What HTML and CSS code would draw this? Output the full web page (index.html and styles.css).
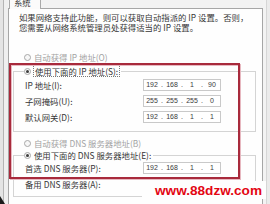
FILE: index.html
```html
<!DOCTYPE html>
<html lang="zh-CN">
<head>
<meta charset="utf-8">
<title>Internet 协议 (TCP/IP) 属性</title>
<link rel="stylesheet" href="styles.css">
</head>
<body>
<div class="screen">
  <div class="side-l"></div>
  <div class="main">
    <div class="tabs"><div class="tab"><span>系统</span></div></div>
    <div class="panel">
      <p class="intro">如果网络支持此功能，则可以获取自动指派的 IP 设置。否则，<br>您需要从网络系统管理员处获得适当的 IP 设置。</p>
      <div class="radio off"><span class="dot"></span>自动获得 IP 地址(O)</div>
      <fieldset class="group g1">
        <legend><span class="radio"><span class="dot on"></span><span class="focus">使用下面的 IP 地址(S):</span></span></legend>
        <div class="row"><span class="lbl">IP 地址(I):</span><span class="ip"><span class="oct">192</span><span class="sep">.</span><span class="oct">168</span><span class="sep">.</span><span class="oct">1</span><span class="sep">.</span><span class="oct">90</span></span></div>
        <div class="row"><span class="lbl">子网掩码(U):</span><span class="ip"><span class="oct">255</span><span class="sep">.</span><span class="oct">255</span><span class="sep">.</span><span class="oct">255</span><span class="sep">.</span><span class="oct">0</span></span></div>
        <div class="row"><span class="lbl">默认网关(D):</span><span class="ip"><span class="oct">192</span><span class="sep">.</span><span class="oct">168</span><span class="sep">.</span><span class="oct">1</span><span class="sep">.</span><span class="oct">1</span></span></div>
      </fieldset>
      <div class="radio off r2"><span class="dot"></span>自动获得 DNS 服务器地址(B)</div>
      <fieldset class="group g2">
        <legend><span class="radio"><span class="dot on"></span>使用下面的 DNS 服务器地址(E):</span></legend>
        <div class="row"><span class="lbl">首选 DNS 服务器(P):</span><span class="ip"><span class="oct">192</span><span class="sep">.</span><span class="oct">168</span><span class="sep">.</span><span class="oct">1</span><span class="sep">.</span><span class="oct">1</span></span></div>
        <div class="row"><span class="lbl">备用 DNS 服务器(A):</span></div>
      </fieldset>
    </div>
  </div>
  <div class="side-r"></div>
  <div class="mark"></div>
  <div class="watermark">www.88dzw.com</div>
  <svg class="cursor" width="6" height="8" viewBox="0 0 6 8"><polygon points="0,0 5,8 0,8" fill="#1a1a1a"/></svg>
</div>
</body>
</html>
```
FILE: styles.css
```css
* { box-sizing: border-box; margin: 0; padding: 0; }
body {
  margin: 0;
  width: 270px;
  height: 204px;
  overflow: hidden;
  background: #ececec;
  font-family: "Noto Sans CJK SC", "Noto Sans", sans-serif;
  font-size: 8.4px;
  color: #363636;
}
.screen {
  position: relative;
  width: 270px;
  height: 204px;
  display: flex;
  overflow: hidden;
}
.side-l {
  width: 8px;
  background: linear-gradient(to right, #e4e4e4 0 3px, #b4b4b4 3px 4px, #efefef 4px);
}
.side-r {
  width: 7px;
  background: linear-gradient(to right, #f3f3f3 0 3px, #d6d6d6 3px 4px, #ebebeb 4px);
}
.main {
  width: 255px;
  display: flex;
  flex-direction: column;
}
.tabs {
  height: 8px;
  background: #f2f2f2;
}
.tab {
  width: 32px;
  height: 9px;
  margin-left: 1px;
  background: #fbfbfb;
  border-left: 1px solid #a9a9a9;
  border-right: 1px solid #a9a9a9;
  overflow: hidden;
  padding-left: 4px;
  position: relative;
  z-index: 1;
}
.tab span {
  display: block;
  margin-top: -3px;
  line-height: 10px;
}
.panel {
  flex: 1;
  background: #fefefe;
  border: 1px solid #a6a6a6;
  border-bottom: none;
}
.intro {
  margin: 3px 0 0 10px;
  line-height: 10px;
  white-space: nowrap;
}
.radio {
  display: flex;
  align-items: center;
  gap: 3px;
  height: 10px;
  line-height: 10px;
  white-space: nowrap;
}
.panel > .radio {
  margin-top: 20px;
  padding-left: 15px;
}
.panel > .radio.r2 {
  margin-top: 6px;
}
.radio.off { color: #a3a3a3; }
.dot {
  width: 7px;
  height: 7px;
  border-radius: 50%;
  border: 1px solid #a8a8a8;
  background: #f7f7f7;
  display: flex;
  align-items: center;
  justify-content: center;
  flex: none;
}
.dot.on::after {
  content: "";
  width: 3px;
  height: 3px;
  border-radius: 50%;
  background: #3c3c3c;
}
.focus {
  outline: 1px dotted #777;
  outline-offset: 0;
  padding: 0 1px;
}
.group {
  margin-left: 4px;
  width: 243px;
  border: 1px solid #d4d4d4;
  padding: 0 0 0 10px;
}
.group legend {
  padding: 0 2px 0 0;
  height: 10px;
}
.g1 { margin-top: 4px; padding-top: 1px; padding-bottom: 6px; }
.g2 { margin-top: 2px; padding-bottom: 4px; }
.row {
  display: flex;
  align-items: center;
  height: 16px;
  padding-left: 1px;
  white-space: nowrap;
}
.lbl { width: 118px; flex: none; }
.ip {
  display: flex;
  width: 78px;
  height: 12px;
  border: 1px solid #c9c9c9;
  background: #fff;
  font-family: "Liberation Sans", Arial, sans-serif;
  font-size: 7px;
  line-height: 10px;
  color: #3a3a3a;
}
.oct { width: 16px; text-align: center; }
.sep { width: 4px; text-align: center; }
.mark {
  position: absolute;
  left: 9px;
  top: 63px;
  width: 231px;
  height: 116px;
  border: 2px solid #a82a3c;
  box-shadow: 1px 1px 0 #e7b8c0, inset 1px 1px 0 #e7b8c0;
}
.watermark {
  position: absolute;
  left: 142px;
  top: 181px;
  padding: 3px 4px 1px 13px;
  background: #fefefe;
  font-family: "Liberation Sans", Arial, sans-serif;
  font-weight: bold;
  font-size: 13.6px;
  line-height: 14px;
  color: #e30613;
  white-space: nowrap;
}
.cursor {
  position: absolute;
  left: 0;
  top: 196px;
}
```
